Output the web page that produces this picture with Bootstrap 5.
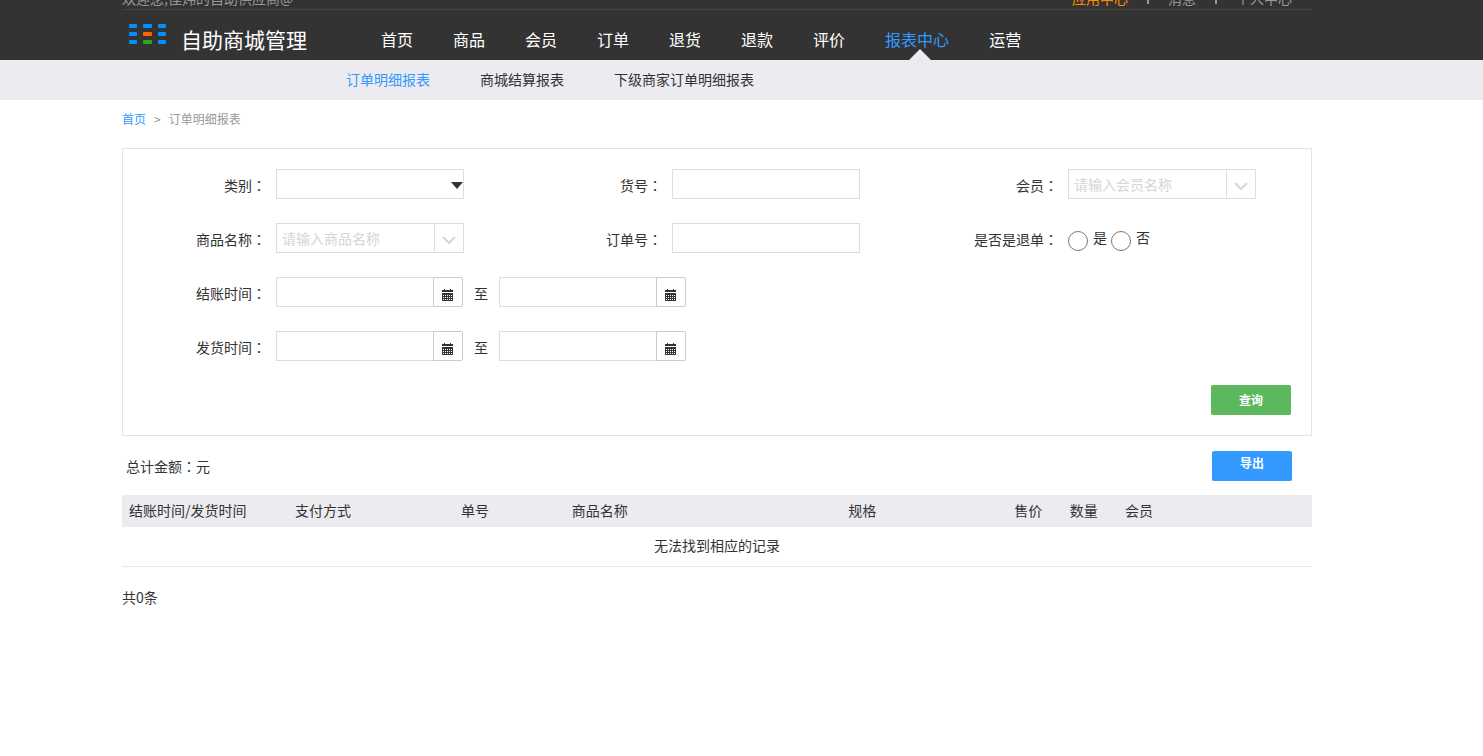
<!DOCTYPE html>
<html lang="zh-CN">
<head>
<meta charset="utf-8">
<meta name="viewport" content="width=device-width, initial-scale=1">
<title>订单明细报表</title>
<link rel="stylesheet" href="https://cdn.jsdelivr.net/npm/bootstrap@5.3.0/dist/css/bootstrap.min.css">
<style>
body{font-family:"Noto Sans CJK SC",sans-serif;font-size:14px;line-height:20px;color:#333}
a{text-decoration:none}
.page-gutter{padding-right:49px}
.page-width{max-width:1190px;margin:0 auto}
.site-header{background:#333}
.welcome-bar{height:10px;overflow:hidden;border-bottom:1px solid #444;padding-bottom:1px;color:#999}
.welcome-bar a{color:#999}
.welcome-bar a.apps{color:#ff8a00}
.welcome-links{padding-right:20px;gap:19px}
.bar-sep{width:2px;height:12px;margin-bottom:4px;background:#999}
.brand-row{height:50px}
.brand{width:239px;padding:8px 0 0 7px;color:#fff;font-size:21px}
.brand:hover{color:#fff}
.brand-mark{margin:0 14px 10px 0}
.main-nav a{position:relative;padding:0 20px;line-height:58px;height:50px;font-size:16px;color:#fff}
.main-nav a.current{color:#39f}
.main-nav a.current::after{content:"";position:absolute;left:44px;bottom:0;border:11px solid transparent;border-top:0;border-bottom-color:#ebebf0}
.sub-nav{background:#ebebf0}
.sub-nav .page-width{padding-left:224px;gap:50px}
.sub-nav a{line-height:38px;padding-bottom:2px;color:#333}
.sub-nav a.current,.crumbs a{color:#39f}
.crumbs{font-size:12px;line-height:20px;color:#999;padding:9px 0 19px;gap:8px}
.panel{border:1px solid #e4e4e4;padding:20px 0}
.field-label{width:153px;padding:3px 10px 0 0;text-align:right;flex:none;line-height:26px}
.colon{font-family:"Noto Sans CJK TC",sans-serif}
.field{width:188px;height:30px;border:1px solid #ddd;background:#fff;flex:none;border-radius:0;padding:0 5px;color:#333}
.field::placeholder{color:#d5d5d5}
.select-wrap{position:relative}
select.field{appearance:none}
.select-wrap svg{position:absolute;right:1px;top:13px;pointer-events:none}
.pick{width:159px}
.drop-btn,.date-btn{width:30px;height:30px;padding:0;border:1px solid #ddd;background:#fff;margin-left:-1px}
.date-btn{border-color:#ccc;border-radius:0 2px 2px 0;padding:2px 2px 0 0}
.date{width:158px}
.until{width:36px;text-align:center;padding-top:3px;line-height:26px}
.flag{width:20px;height:20px;margin:8px 5px 0 0}
.flag-label{margin-right:4px;line-height:28px}
.act{width:80px;height:30px;border:0;border-radius:2px;color:#fff;font-size:12px;font-weight:700}
.act-query{background:#5cb85c}
.act-export{background:#39f;padding-bottom:7px}
.summary{padding:15px 20px 14px 4px}
.records{width:100%;table-layout:fixed;border-bottom:1px solid #e8e8e8}
.records th{background:#ebebf0;font-weight:400;line-height:20px;padding:5px 7px 7px}
.records td{text-align:center;line-height:20px;padding:8px 7px 11px}
.total{margin:20px 0}
</style>
<script src="https://cdn.jsdelivr.net/npm/bootstrap@5.3.0/dist/js/bootstrap.bundle.min.js"></script>
</head>
<body>
<svg class="d-none">
  <symbol id="calendar" viewBox="0 0 11 12"><path fill="#333" d="M2 0h1v1h5V0h1v1h2v2H0V1h2zM0 4h11v8H0z"/><path stroke="#fff" stroke-width="1" stroke-dasharray="1 1" d="M1 6.5h9M1 8.5h9M1 10.5h9" /></symbol>
  <symbol id="chevron" viewBox="0 0 14 9"><path fill="none" stroke="#d5d5d5" stroke-width="2" d="M1 1l6 6 6-6"/></symbol>
</svg>
<header class="site-header page-gutter">
  <div class="page-width">
    <div class="welcome-bar d-flex justify-content-between align-items-end">
      <span>欢迎您,佳炜的自助供应商@</span>
      <nav class="welcome-links d-flex align-items-end" aria-label="账户">
        <a class="apps" href="#">应用中心</a><span class="bar-sep"></span>
        <a href="#">消息</a><span class="bar-sep"></span>
        <a href="#">个人中心</a>
      </nav>
    </div>
    <div class="brand-row d-flex">
      <a class="brand d-flex align-items-center" href="#">
        <svg class="brand-mark" width="38" height="21" viewBox="0 0 38 21"><g fill="#0090ff"><rect width="8" height="4" rx="1"/><rect x="14" width="9" height="4" rx="1"/><rect x="29" width="8" height="4" rx="1"/><rect y="8" width="8" height="4" rx="1"/><rect x="29" y="8" width="8" height="4" rx="1"/><rect y="16" width="8" height="4" rx="1"/><rect x="29" y="16" width="8" height="4" rx="1"/></g><rect x="14" y="8" width="9" height="4" rx="1" fill="#ff6600"/><rect x="14" y="16" width="9" height="4" rx="1" fill="#2ea52e"/></svg>
        <span>自助商城管理</span>
      </a>
      <nav class="main-nav d-flex" aria-label="主导航">
        <a href="#">首页</a><a href="#">商品</a><a href="#">会员</a><a href="#">订单</a><a href="#">退货</a><a href="#">退款</a><a href="#">评价</a><a class="current" href="#">报表中心</a><a href="#">运营</a>
      </nav>
    </div>
  </div>
</header>
<nav class="sub-nav page-gutter" aria-label="报表">
  <div class="page-width d-flex">
    <a class="current" href="#">订单明细报表</a><a href="#">商城结算报表</a><a href="#">下级商家订单明细报表</a>
  </div>
</nav>
<main class="page-gutter">
  <div class="page-width">
    <div class="crumbs d-flex"><a href="#">首页</a><span>&gt;</span><span>订单明细报表</span></div>
    <form class="panel">
      <div class="row g-0 mb-4">
        <div class="col-4 d-flex">
          <label class="field-label" for="category">类别<span class="colon" lang="zh-TW">：</span></label>
          <div class="select-wrap"><select class="field" id="category"><option></option></select><svg width="12" height="7" viewBox="0 0 12 7"><path fill="#333" d="M0 0h12L6 7z"/></svg></div>
        </div>
        <div class="col-4 d-flex">
          <label class="field-label" for="sku">货号<span class="colon" lang="zh-TW">：</span></label>
          <input class="field" id="sku" type="text">
        </div>
        <div class="col-4 d-flex">
          <label class="field-label" for="member">会员<span class="colon" lang="zh-TW">：</span></label>
          <input class="field pick" id="member" type="text" placeholder="请输入会员名称"><button class="drop-btn" type="button" aria-label="展开"><svg width="14" height="9"><use href="#chevron"/></svg></button>
        </div>
      </div>
      <div class="row g-0 mb-4">
        <div class="col-4 d-flex">
          <label class="field-label" for="goods">商品名称<span class="colon" lang="zh-TW">：</span></label>
          <input class="field pick" id="goods" type="text" placeholder="请输入商品名称"><button class="drop-btn" type="button" aria-label="展开"><svg width="14" height="9"><use href="#chevron"/></svg></button>
        </div>
        <div class="col-4 d-flex">
          <label class="field-label" for="order">订单号<span class="colon" lang="zh-TW">：</span></label>
          <input class="field" id="order" type="text">
        </div>
        <div class="col-4 d-flex">
          <span class="field-label">是否是退单<span class="colon" lang="zh-TW">：</span></span>
          <input class="flag" type="radio" name="refund" id="yes"><label class="flag-label" for="yes">是</label>
          <input class="flag" type="radio" name="refund" id="no"><label class="flag-label" for="no">否</label>
        </div>
      </div>
      <div class="d-flex mb-4">
        <label class="field-label" for="paid-from">结账时间<span class="colon" lang="zh-TW">：</span></label>
        <input class="field date" id="paid-from" type="text"><button class="date-btn" type="button" aria-label="选择日期"><svg width="11" height="12"><use href="#calendar"/></svg></button>
        <label class="until" for="paid-to">至</label>
        <input class="field date" id="paid-to" type="text"><button class="date-btn" type="button" aria-label="选择日期"><svg width="11" height="12"><use href="#calendar"/></svg></button>
      </div>
      <div class="d-flex mb-4">
        <label class="field-label" for="sent-from">发货时间<span class="colon" lang="zh-TW">：</span></label>
        <input class="field date" id="sent-from" type="text"><button class="date-btn" type="button" aria-label="选择日期"><svg width="11" height="12"><use href="#calendar"/></svg></button>
        <label class="until" for="sent-to">至</label>
        <input class="field date" id="sent-to" type="text"><button class="date-btn" type="button" aria-label="选择日期"><svg width="11" height="12"><use href="#calendar"/></svg></button>
      </div>
      <div class="d-flex justify-content-end pe-3 me-1"><button class="act act-query" type="button">查询</button></div>
    </form>
    <div class="summary d-flex justify-content-between align-items-center">
      <span>总计金额<span class="colon" lang="zh-TW">：</span>元</span>
      <button class="act act-export" type="button">导出</button>
    </div>
    <table class="records">
      <colgroup><col style="width:13.95%"><col style="width:13.95%"><col style="width:9.3%"><col style="width:23.25%"><col style="width:13.95%"><col style="width:4.65%"><col style="width:4.65%"><col></colgroup>
      <thead><tr><th>结账时间/发货时间</th><th>支付方式</th><th>单号</th><th>商品名称</th><th>规格</th><th>售价</th><th>数量</th><th>会员</th></tr></thead>
      <tbody><tr><td colspan="8">无法找到相应的记录</td></tr></tbody>
    </table>
    <p class="total">共0条</p>
  </div>
</main>
</body>
</html>
